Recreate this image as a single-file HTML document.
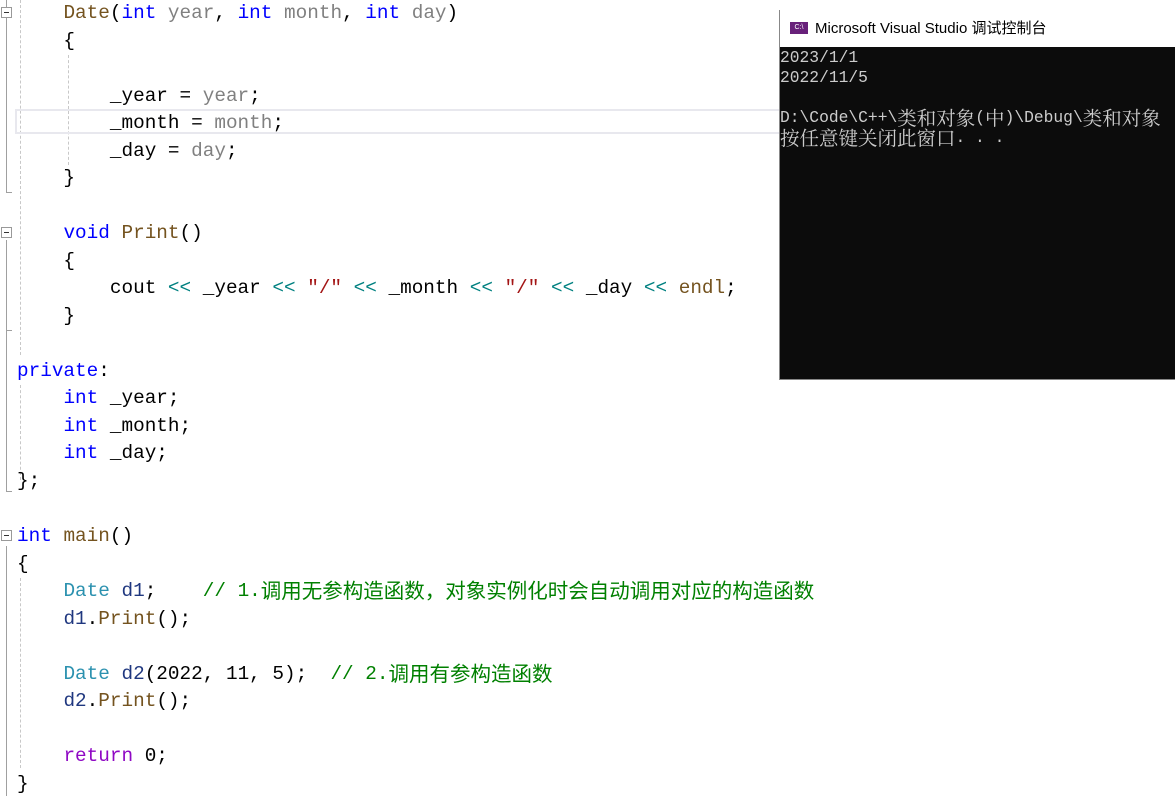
<!DOCTYPE html>
<html><head><meta charset="utf-8"><style>
body{margin:0;width:1175px;height:796px;background:#fff;overflow:hidden;position:relative;font-family:"Liberation Mono","Noto Sans CJK SC",monospace;font-size:19.35px;}
.l{position:absolute;left:17px;height:27.5px;line-height:27.5px;white-space:pre;color:#000}
.k{color:#0000ff}.f{color:#74531f}.p{color:#808080}.s{color:#a31515}.c{color:#008000}.t{color:#2b91af}.o{color:#008080}.m{color:#8f08c4}.v{color:#1f377f}
.cj{font-family:"Noto Sans CJK SC",sans-serif;font-size:20.5px;line-height:1px;display:inline-block;vertical-align:top;margin-top:11px}
.fold{position:absolute;left:1px;width:9px;height:9px;border:1px solid #999;background:#fff}
.fold:after{content:"";position:absolute;left:2px;top:4px;width:5px;height:1px;background:#333}
.vl{position:absolute;left:6px;width:1px;background:#a0a0a0}
.dg{position:absolute;width:0;border-left:1px dashed #c8c8c8}
.cl{height:20px;line-height:20px;white-space:pre;overflow:visible}
.cc{font-family:"Noto Serif CJK SC",serif;font-size:19.5px;line-height:1px;display:inline-block;vertical-align:top;margin-top:9px}
</style></head><body>
<div class="vl" style="top:0;height:192px"></div>
<div class="vl" style="top:240px;height:90px"></div>
<div class="vl" style="top:330px;height:162px;left:6px"></div>
<div style="position:absolute;left:6px;top:491px;width:6px;height:1px;background:#a0a0a0"></div>
<div style="position:absolute;left:6px;top:192px;width:6px;height:1px;background:#a0a0a0"></div>
<div style="position:absolute;left:6px;top:330px;width:6px;height:1px;background:#a0a0a0"></div>
<div class="vl" style="top:546px;height:250px"></div>
<div class="fold" style="top:7px"></div>
<div class="fold" style="top:227px"></div>
<div class="fold" style="top:530px"></div>
<div class="dg" style="left:20px;top:0;height:355px"></div>
<div class="dg" style="left:20px;top:385px;height:95px"></div>
<div class="dg" style="left:68px;top:55px;height:110px"></div>
<div class="dg" style="left:20px;top:578px;height:190px"></div>
<div style="position:absolute;left:15px;top:109px;width:770px;height:25px;border:2px solid #e8e8ee;box-sizing:border-box"></div>

<div class="l" style="top:0">    <span class="f">Date</span>(<span class="k">int</span> <span class="p">year</span>, <span class="k">int</span> <span class="p">month</span>, <span class="k">int</span> <span class="p">day</span>)</div>
<div class="l" style="top:27.5px">    {</div>
<div class="l" style="top:82.5px">        _year = <span class="p">year</span>;</div>
<div class="l" style="top:110px">        _month = <span class="p">month</span>;</div>
<div class="l" style="top:137.5px">        _day = <span class="p">day</span>;</div>
<div class="l" style="top:165px">    }</div>
<div class="l" style="top:220px">    <span class="k">void</span> <span class="f">Print</span>()</div>
<div class="l" style="top:247.5px">    {</div>
<div class="l" style="top:275px">        cout <span class="o">&lt;&lt;</span> _year <span class="o">&lt;&lt;</span> <span class="s">"/"</span> <span class="o">&lt;&lt;</span> _month <span class="o">&lt;&lt;</span> <span class="s">"/"</span> <span class="o">&lt;&lt;</span> _day <span class="o">&lt;&lt;</span> <span class="f">endl</span>;</div>
<div class="l" style="top:302.5px">    }</div>
<div class="l" style="top:357.5px"><span class="k">private</span>:</div>
<div class="l" style="top:385px">    <span class="k">int</span> _year;</div>
<div class="l" style="top:412.5px">    <span class="k">int</span> _month;</div>
<div class="l" style="top:440px">    <span class="k">int</span> _day;</div>
<div class="l" style="top:467.5px">};</div>
<div class="l" style="top:523px"><span class="k">int</span> <span class="f">main</span>()</div>
<div class="l" style="top:550.5px">{</div>
<div class="l" style="top:578px">    <span class="t">Date</span> <span class="v">d1</span>;    <span class="c">// 1.<span class="cj">调用无参构造函数，对象实例化时会自动调用对应的构造函数</span></span></div>
<div class="l" style="top:605.5px">    <span class="v">d1</span>.<span class="f">Print</span>();</div>
<div class="l" style="top:660.5px">    <span class="t">Date</span> <span class="v">d2</span>(2022, 11, 5);  <span class="c">// 2.<span class="cj">调用有参构造函数</span></span></div>
<div class="l" style="top:688px">    <span class="v">d2</span>.<span class="f">Print</span>();</div>
<div class="l" style="top:743px">    <span class="m">return</span> 0;</div>
<div class="l" style="top:770.5px">}</div>

<div style="position:absolute;left:779px;top:10px;width:396px;height:370px;border-left:1px solid #888;border-bottom:1px solid #888;box-sizing:border-box;background:#0c0c0c;overflow:hidden">
 <div style="height:37px;background:#fff;position:relative;font-family:'Liberation Sans','Noto Sans CJK SC',sans-serif;font-size:15px;line-height:37px;padding-left:35px;color:#000">
  <div style="position:absolute;left:10px;top:12px;width:18px;height:12px;background:#68217a;color:#fff;font-size:7px;line-height:12px;text-align:center">C:\</div>
  Microsoft Visual Studio 调试控制台</div>
 <div style="color:#ccc;font-family:'Liberation Mono',monospace;font-size:16.3px;padding-top:1px">
<div class="cl">2023/1/1</div>
<div class="cl">2022/11/5</div>
<div class="cl"></div>
<div class="cl">D:\Code\C++\<span class="cc">类和对象</span>(<span class="cc">中</span>)\Debug\<span class="cc">类和对象</span></div>
<div class="cl"><span class="cc">按任意键关闭此窗口</span>. . .</div>
</div>
</div>
</body></html>
